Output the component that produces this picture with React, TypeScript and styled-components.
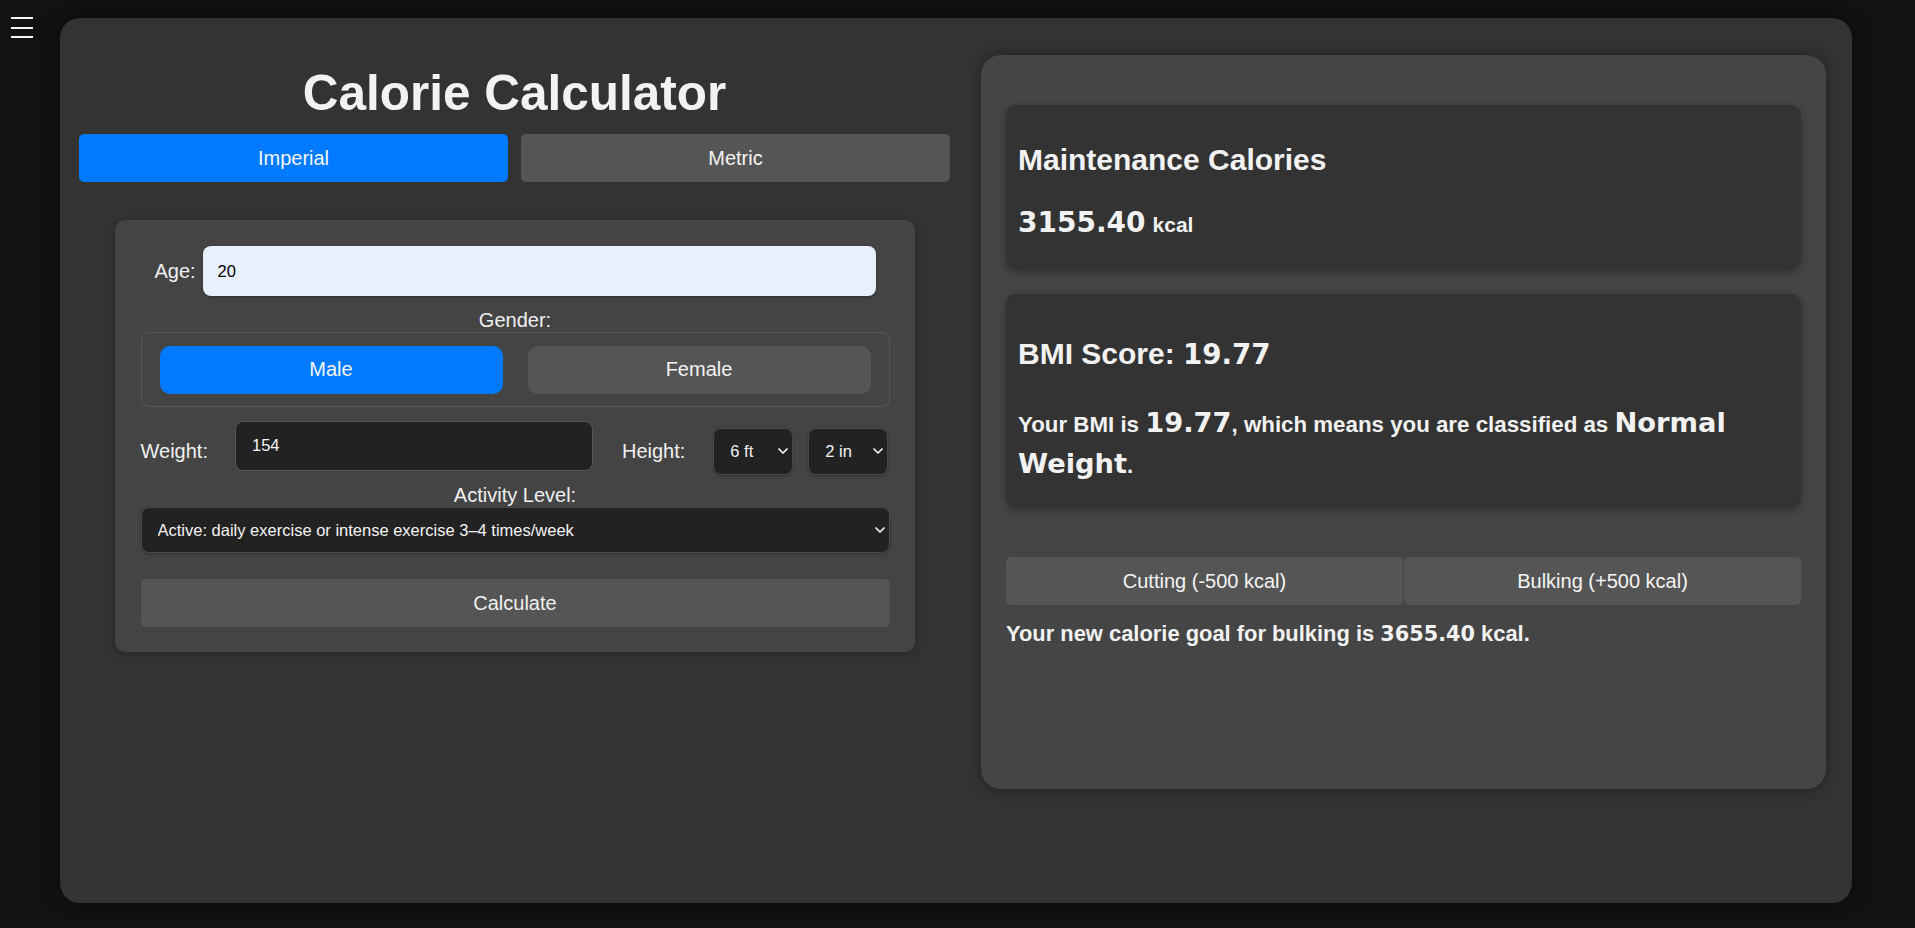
import React, { useState } from "react";
import styled, { createGlobalStyle } from "styled-components";
import { ChevronDown } from "lucide-react";

const GlobalStyle = createGlobalStyle`
  html, body { margin: 0; padding: 0; background: #121212; }
  body { font-family: "Liberation Sans", Arial, sans-serif; color: #f2f2f2; }
  * { box-sizing: border-box; }
`;

const Page = styled.div`
  width: 1915px;
  height: 928px;
  padding: 18px 63px 25px 60px;
  background: #121212;
`;

const MenuToggle = styled.button`
  position: fixed;
  top: 17px;
  left: 11px;
  width: 22px;
  padding: 0;
  border: 0;
  background: transparent;
  display: flex;
  flex-direction: column;
  gap: 7.5px;
  cursor: pointer;
`;

const MenuBar = styled.span`
  display: block;
  width: 22px;
  height: 2px;
  background: #f4f4f4;
`;

const Main = styled.main`
  display: flex;
  align-items: flex-start;
  gap: 31px;
  height: 885px;
  padding: 37px 26px 0 19px;
  background: #333333;
  border-radius: 20px;
  box-shadow: 0 0 18px rgba(0, 0, 0, 0.45);
`;

const LeftColumn = styled.section`
  width: 871px;
  display: flex;
  flex-direction: column;
`;

const Title = styled.h1`
  margin: 8.5px 0 0;
  font-size: 49.5px;
  line-height: 57px;
  font-weight: 700;
  text-align: center;
  color: #f2f2f2;
`;

const ToggleRow = styled.div`
  display: flex;
  gap: 13px;
  margin-top: 13.5px;
`;

const PillButton = styled.button<{ $active?: boolean; $radius?: number }>`
  flex: 1;
  height: 48px;
  border: 0;
  border-radius: ${(p) => p.$radius ?? 5}px;
  background: ${(p) => (p.$active ? "#007bff" : "#555555")};
  color: #f4f4f4;
  font-family: "Liberation Sans", Arial, sans-serif;
  font-size: 20px;
  cursor: pointer;
`;

const FormCard = styled.form`
  width: 800px;
  margin: 38px auto 0;
  padding: 26px 25px 25px 26px;
  background: #444444;
  border-radius: 10px;
  box-shadow: 0 2px 10px rgba(0, 0, 0, 0.25);
  display: flex;
  flex-direction: column;
`;

const AgeRow = styled.div`
  display: flex;
  justify-content: center;
  align-items: center;
  gap: 7px;
`;

const Label = styled.label<{ $mb?: number; $ml?: number }>`
  font-size: 20px;
  line-height: 23px;
  color: #f0f0f0;
  white-space: nowrap;
  margin-bottom: ${(p) => p.$mb ?? 0}px;
  margin-left: ${(p) => p.$ml ?? 0}px;
`;

const CenterLabel = styled.div<{ $mt: number }>`
  font-size: 20px;
  line-height: 23px;
  text-align: center;
  color: #f0f0f0;
  margin-top: ${(p) => p.$mt}px;
`;

const AgeInput = styled.input`
  width: 673px;
  height: 50px;
  padding: 0 15px;
  border: 0;
  border-radius: 8px;
  background: #e8f0fe;
  color: #000;
  font-family: "Liberation Sans", Arial, sans-serif;
  font-size: 16.5px;
  box-shadow: 0 1px 3px rgba(0, 0, 0, 0.3);
  outline: none;
`;

const GenderBox = styled.div`
  display: flex;
  gap: 25px;
  padding: 13px 18px 12px;
  border: 1px solid #575757;
  border-radius: 8px;
`;

const MeasureRow = styled.div`
  display: flex;
  align-items: flex-end;
  margin-top: 14px;
`;

const DarkInput = styled.input`
  width: 358px;
  height: 50px;
  margin-left: 27px;
  margin-bottom: 4px;
  padding: 0 16px;
  border: 1px solid #555;
  border-radius: 8px;
  background: #222222;
  color: #f4f4f4;
  font-family: "Liberation Sans", Arial, sans-serif;
  font-size: 16.5px;
  outline: none;
`;

const SelectWrap = styled.div<{ $width?: number; $height: number; $ml?: number }>`
  position: relative;
  width: ${(p) => (p.$width ? `${p.$width}px` : "100%")};
  height: ${(p) => p.$height}px;
  margin-left: ${(p) => p.$ml ?? 0}px;
  flex-shrink: 0;
`;

const Select = styled.select`
  appearance: none;
  -webkit-appearance: none;
  width: 100%;
  height: 100%;
  padding: 0 24px 0 16px;
  border: 1px solid #4a4a4a;
  border-radius: 8px;
  background: #222222;
  color: #f4f4f4;
  font-family: "Liberation Sans", Arial, sans-serif;
  font-size: 16.5px;
  box-shadow: 0 1px 3px rgba(0, 0, 0, 0.3);
  outline: none;
`;

const Chevron = styled(ChevronDown)`
  position: absolute;
  right: 2px;
  top: 50%;
  transform: translateY(-50%);
  color: #f4f4f4;
  pointer-events: none;
`;

const CalcButton = styled.button`
  height: 48px;
  margin-top: 26px;
  border: 0;
  border-radius: 5px;
  background: #555555;
  color: #f0f0f0;
  font-family: "Liberation Sans", Arial, sans-serif;
  font-size: 20px;
  cursor: pointer;
`;

const ResultPanel = styled.section`
  width: 845px;
  height: 734px;
  padding: 50px 25px 0;
  background: #454545;
  border-radius: 20px;
  box-shadow: 0 0 14px rgba(0, 0, 0, 0.35);
  display: flex;
  flex-direction: column;
`;

const ResultCard = styled.div<{ $mt?: number }>`
  margin-top: ${(p) => p.$mt ?? 0}px;
  padding: 13px 12px;
  background: #333333;
  border-radius: 10px;
  box-shadow: 0 3px 10px rgba(0, 0, 0, 0.3);
`;

const CardTitle = styled.h2<{ $mt: number }>`
  margin: ${(p) => p.$mt}px 0 0;
  font-size: 30px;
  line-height: 34px;
  font-weight: 700;
  color: #f2f2f2;
`;

const Heavy = styled.span<{ $size: number }>`
  font-family: "DejaVu Sans", "Arial Black", sans-serif;
  font-weight: 700;
  font-size: ${(p) => p.$size}px;
`;

const ValueLine = styled.div`
  display: flex;
  align-items: baseline;
  gap: 7px;
  margin: 32px 0 19px;
  line-height: 1;
  font-weight: 700;
`;

const Unit = styled.span`
  font-size: 21px;
  font-weight: 700;
`;

const BmiText = styled.p`
  margin: 30.5px 0 9.5px;
  font-size: 22.3px;
  line-height: 39px;
  font-weight: 700;
  color: #f2f2f2;
`;

const GoalRow = styled.div`
  display: flex;
  gap: 1px;
  margin-top: 50px;
`;

const GoalText = styled.p`
  margin: 16px 0 0;
  font-size: 21.9px;
  line-height: 25px;
  font-weight: 700;
  color: #f2f2f2;
`;

export default function App() {
  const [unit, setUnit] = useState<"imperial" | "metric">("imperial");
  const [gender, setGender] = useState<"male" | "female">("male");
  const [goal, setGoal] = useState<"cut" | "bulk">("bulk");

  return (
    <Page>
      <GlobalStyle />
      <MenuToggle aria-label="Open menu">
        <MenuBar />
        <MenuBar />
        <MenuBar />
      </MenuToggle>
      <Main>
        <LeftColumn>
          <Title>Calorie Calculator</Title>
          <ToggleRow>
            <PillButton $active={unit === "imperial"} onClick={() => setUnit("imperial")}>
              Imperial
            </PillButton>
            <PillButton $active={unit === "metric"} onClick={() => setUnit("metric")}>
              Metric
            </PillButton>
          </ToggleRow>
          <FormCard onSubmit={(e) => e.preventDefault()}>
            <AgeRow>
              <Label htmlFor="age">Age:</Label>
              <AgeInput id="age" defaultValue="20" />
            </AgeRow>
            <CenterLabel $mt={12.5}>Gender:</CenterLabel>
            <GenderBox>
              <PillButton
                type="button"
                $radius={10}
                $active={gender === "male"}
                onClick={() => setGender("male")}
              >
                Male
              </PillButton>
              <PillButton
                type="button"
                $radius={10}
                $active={gender === "female"}
                onClick={() => setGender("female")}
              >
                Female
              </PillButton>
            </GenderBox>
            <MeasureRow>
              <Label htmlFor="weight" $mb={11.5}>
                Weight:
              </Label>
              <DarkInput id="weight" defaultValue="154" />
              <Label $mb={11.5} $ml={29}>
                Height:
              </Label>
              <SelectWrap $width={80} $height={47} $ml={28}>
                <Select defaultValue="6">
                  <option value="4">4 ft</option>
                  <option value="5">5 ft</option>
                  <option value="6">6 ft</option>
                  <option value="7">7 ft</option>
                </Select>
                <Chevron size={16} strokeWidth={2.6} />
              </SelectWrap>
              <SelectWrap $width={80} $height={47} $ml={15}>
                <Select defaultValue="2">
                  <option value="0">0 in</option>
                  <option value="1">1 in</option>
                  <option value="2">2 in</option>
                  <option value="3">3 in</option>
                </Select>
                <Chevron size={16} strokeWidth={2.6} />
              </SelectWrap>
            </MeasureRow>
            <CenterLabel $mt={9.5}>Activity Level:</CenterLabel>
            <SelectWrap $height={46}>
              <Select defaultValue="active">
                <option value="sedentary">Sedentary: little or no exercise</option>
                <option value="light">Light: exercise 1–3 times/week</option>
                <option value="moderate">Moderate: exercise 4–5 times/week</option>
                <option value="active">Active: daily exercise or intense exercise 3–4 times/week</option>
                <option value="very">Very Active: intense exercise 6–7 times/week</option>
              </Select>
              <Chevron size={16} strokeWidth={2.6} />
            </SelectWrap>
            <CalcButton type="submit">Calculate</CalcButton>
          </FormCard>
        </LeftColumn>

        <ResultPanel>
          <ResultCard>
            <CardTitle $mt={25}>Maintenance Calories</CardTitle>
            <ValueLine>
              <Heavy $size={28}>3155.40</Heavy>
              <Unit>kcal</Unit>
            </ValueLine>
          </ResultCard>
          <ResultCard $mt={25}>
            <CardTitle $mt={30}>
              BMI Score: <Heavy $size={27.7}>19.77</Heavy>
            </CardTitle>
            <BmiText>
              Your BMI is <Heavy $size={27.3}>19.77</Heavy>, which means you are classified as{" "}
              <Heavy $size={27.3}>Normal Weight</Heavy>.
            </BmiText>
          </ResultCard>
          <GoalRow>
            <PillButton $active={false} onClick={() => setGoal("cut")}>
              Cutting (-500 kcal)
            </PillButton>
            <PillButton $active={false} onClick={() => setGoal("bulk")}>
              Bulking (+500 kcal)
            </PillButton>
          </GoalRow>
          <GoalText>
            Your new calorie goal for {goal === "bulk" ? "bulking" : "cutting"} is{" "}
            <Heavy $size={20.8}>{goal === "bulk" ? "3655.40" : "2655.40"}</Heavy> kcal.
          </GoalText>
        </ResultPanel>
      </Main>
    </Page>
  );
}
